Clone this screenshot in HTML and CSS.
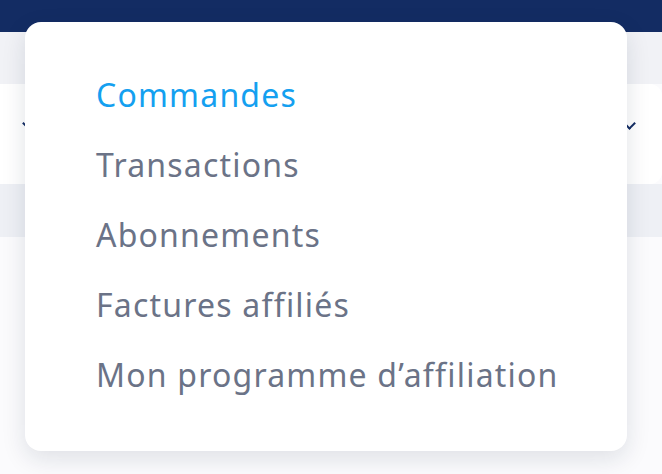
FILE: index.html
```html
<!DOCTYPE html>
<html lang="fr">
<head>
  <meta charset="UTF-8">
  <title>Menu compte</title>
  <meta name="viewport" content="width=device-width, initial-scale=1.0">
  <link rel="stylesheet" href="styles.css">
</head>
<body>
  <div class="topbar"></div>

  <div class="page">
    <div class="spacer"></div>
    <div class="filter-bar">
      <span class="chevron left"></span>
      <span class="chevron right"></span>
    </div>
    <div class="band"></div>
  </div>

  <div class="dropdown">
    <ul class="menu">
      <li><a href="#" class="active">Commandes</a></li>
      <li><a href="#">Transactions</a></li>
      <li><a href="#">Abonnements</a></li>
      <li><a href="#">Factures affiliés</a></li>
      <li><a href="#">Mon programme d’affiliation</a></li>
    </ul>
  </div>
</body>
</html>
```

FILE: styles.css
```css
body {
  margin: 0;
  font-family: "Noto Sans", "Open Sans", sans-serif;
  background-color: #fbfbfd;
  overflow: hidden;
}
.topbar {
  height: 32px;
  background-color: #132c63;
}
.page {
  display: flex;
  flex-direction: column;
}
.spacer {
  height: 52px;
  background-color: #f1f2f6;
}
.filter-bar {
  height: 100px;
  background-color: #fff;
  border-radius: 0 12px 12px 0;
  display: flex;
  align-items: center;
  justify-content: space-between;
  padding: 0 28px 0 24px;
}
.chevron {
  width: 7px;
  height: 7px;
  border-right: 2px solid #132c63;
  border-bottom: 2px solid #132c63;
  transform: rotate(45deg);
  margin-top: -22px;
}
.band {
  height: 53px;
  background-color: #eef0f5;
}

/* menu deroulant */
.dropdown {
  position: absolute;
  top: 22px;
  left: 25px;
  width: 602px;
  height: 429px;
  box-sizing: border-box;
  background-color: #fff;
  border-radius: 16px;
  box-shadow: 0 8px 24px rgba(20, 30, 60, 0.12);
  padding: 38px 0 0 71px;
}
.menu {
  list-style: none;
  margin: 0;
  padding: 0;
}
.menu li {
  font-size: 32px;
  line-height: 70px;
  letter-spacing: 1.2px;
}
.menu a {
  color: #6b7387;
  text-decoration: none;
}
.menu a.active {
  color: #14a0f0;
}
```
